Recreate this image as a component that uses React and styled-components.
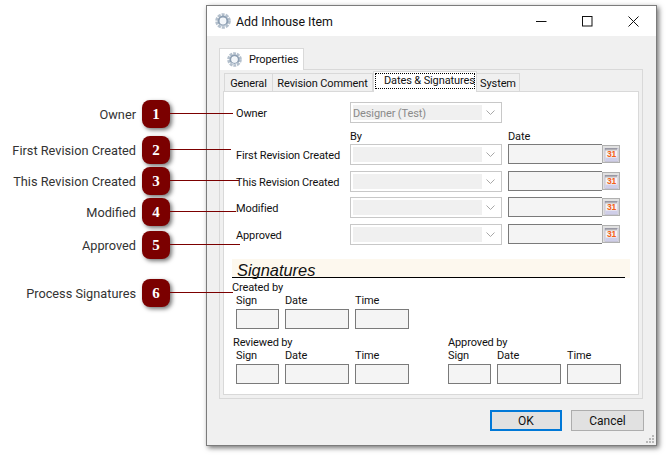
import React from "react";
import styled, { createGlobalStyle } from "styled-components";

const Global = createGlobalStyle`
  *, *::before, *::after { box-sizing: border-box; }
  html, body { margin: 0; padding: 0; background: #fff; }
  body { font-family: Roboto, "Noto Sans", sans-serif; font-size: 11px; letter-spacing: -0.12px; color: #111; overflow: hidden; }
`;
const Page = styled.div`display:flex;align-items:flex-start;width:667px;height:455px;overflow:hidden;`;
const Callouts = styled.div`position:relative;z-index:2;display:flex;flex-direction:column;width:170px;padding-top:100px;flex:none;letter-spacing:0;`;
const CalloutRow = styled.div`display:flex;align-items:center;justify-content:flex-end;gap:6px;height:28px;margin-top:${p=>p.$gap}px;`;
const CalloutLabel = styled.span`font-family:Roboto,sans-serif;font-size:12.75px;color:#333;white-space:nowrap;`;
const Badge = styled.div`
  position:relative;width:28px;height:28px;flex:none;border-radius:8px;background:#7b0000;color:#fff;
  display:flex;align-items:center;justify-content:center;font-family:"Liberation Serif",serif;font-weight:700;font-size:15px;
  box-shadow:2px 2px 4px rgba(0,0,0,.55);
  &::after{content:"";position:absolute;left:100%;top:13px;height:1.4px;width:${p=>p.$line}px;background:#7b0000;}
`;
const Dialog = styled.div`
  position:relative;flex:none;margin:5px 0 0 36px;width:451px;height:441px;background:#f0f0f0;
  border:1px solid #7c7c7c;box-shadow:2px 2px 5px rgba(0,0,0,.55);display:flex;flex-direction:column;
`;
const TitleBar = styled.div`height:30px;background:#fff;display:flex;align-items:center;padding-left:8px;flex:none;`;
const TitleText = styled.span`font-size:12.4px;letter-spacing:0;margin-left:5px;flex:1;color:#111;`;
const WinBtn = styled.div`width:46px;height:30px;display:flex;align-items:center;justify-content:center;`;
const Body = styled.div`flex:1;padding:12px 12px 0;display:flex;flex-direction:column;`;
const PropTab = styled.div`
  position:relative;z-index:1;width:85px;height:22px;margin-bottom:-1px;background:#fff;border:1px solid #d9d9d9;border-bottom:none;
  display:flex;align-items:center;gap:7px;padding-left:7px;
`;
const OuterPanel = styled.div`width:424px;height:330px;border:1px solid #d9d9d9;padding:1px 3px 3px;display:flex;flex-direction:column;`;
const TabStrip = styled.div`display:flex;align-items:flex-end;height:21px;flex:none;position:relative;z-index:1;margin-bottom:-1px;padding-left:1px;`;
const InnerTab = styled.div`
  width:${p=>p.$w}px;height:${p=>p.$active?21:19}px;background:${p=>p.$active?"#fff":"#f0f0f0"};
  border:1px solid #d9d9d9;border-bottom:${p=>p.$active?"none":"1px solid #d9d9d9"};border-left:${p=>p.$first||p.$active?"1px solid #d9d9d9":"none"};
  display:flex;align-items:center;justify-content:center;white-space:nowrap;padding-top:1px;
`;
const Focus = styled.span`border:1px dotted #000;padding:0 0 0 8px;line-height:14px;margin-top:-3px;width:100px;text-align:center;`;
const InnerPanel = styled.div`flex:1;background:#fff;border:1px solid #d9d9d9;padding-top:10px;display:flex;flex-direction:column;`;
const Form = styled.div`padding-left:12px;`;
const Row = styled.div`display:flex;align-items:flex-start;height:21px;margin-top:${p=>p.$gap||0}px;`;
const FieldLabel = styled.div`width:114px;flex:none;line-height:16px;margin-top:${p=>p.$dy||0}px;white-space:nowrap;`;
const Select = styled.div`
  width:152px;height:21px;flex:none;border:1px solid #c8c8c8;padding:2px;display:flex;align-items:stretch;background:#fff;
`;
const SelectValue = styled.div`width:129px;background:#f0f0f0;color:#8a8a8a;line-height:17px;white-space:nowrap;`;
const Chevron = styled.div`flex:1;display:flex;align-items:center;justify-content:center;`;
const DateInput = styled.div`width:94px;height:20px;flex:none;margin-left:6px;background:#f4f4f4;border:1px solid #7a7a7a;border-right:none;`;
const CalBtn = styled.div`width:18px;height:18px;flex:none;margin:1px 0 0 0;border:1px solid #b0b0b0;background:#e1e1e1;display:flex;align-items:center;justify-content:center;`;
const HeadRow = styled.div`display:flex;height:16px;margin-top:5px;line-height:18px;`;
const HeadBy = styled.div`margin-left:114px;width:158px;`;
const Band = styled.div`margin:14px 0 0 8px;width:398px;height:19px;background:#fdf8ee;`;
const Heading = styled.div`width:393px;height:19px;border-bottom:1.5px solid #000;padding-left:5px;font-family:"Liberation Sans",sans-serif;font-style:italic;font-size:16.4px;letter-spacing:0;line-height:23px;color:#111;`;
const SignArea = styled.div`padding-left:12px;`;
const Groups = styled.div`display:flex;gap:39px;margin-top:${p=>p.$gap}px;`;
const Group = styled.div`display:grid;grid-template-columns:43px 64px 54px;column-gap:6px;grid-auto-rows:auto;`;
const GroupTitle = styled.div`grid-column:1 / -1;line-height:15px;height:13px;margin-left:${p=>p.$dx||0}px;white-space:nowrap;`;
const ColLabel = styled.div`line-height:15px;height:16px;`;
const SignInput = styled.div`height:20px;background:#f4f4f4;border:1px solid #7a7a7a;`;
const Footer = styled.div`display:flex;justify-content:flex-end;gap:9px;margin-top:11px;`;
const Button = styled.div`
  width:${p=>p.$w}px;height:21px;background:#e1e1e1;border:${p=>p.$primary?"2px solid #0078d7":"1px solid #adadad"};
  display:flex;align-items:center;justify-content:center;font-size:12px;letter-spacing:0;
`;
const Grip = styled.svg`position:absolute;right:1px;bottom:1px;`;

const Gear = ({ size = 16 }) => (
  <svg width={size} height={size} viewBox="0 0 16 16">
    <circle cx="8" cy="8" r="6.4" fill="none" stroke="#b4c0cd" strokeWidth="2.8" strokeDasharray="3 1" />
    <circle cx="8" cy="8" r="4.4" fill="none" stroke="#8d9fb3" strokeWidth="2" />
    <circle cx="8" cy="8" r="3" fill="#f2f6fa" />
    <path d="M4.6 11.6a5 5 0 0 0 6.8 0" fill="none" stroke="#d3dce5" strokeWidth="1" />
  </svg>
);
const Cal = () => (
  <svg width="15" height="15" viewBox="0 0 15 15">
    <rect x="1" y="1.5" width="13" height="13" fill="#f5f2f2" stroke="#b3b1c8" strokeWidth=".7" />
    <path d="M2 1v2.4M4 1v2.4M6 1v2.4M8 1v2.4M10 1v2.4M12 1v2.4" stroke="#6f6e78" strokeWidth="1" />
    <rect x="1.4" y="10.6" width="12.2" height="3.6" fill="#cfcee8" />
    <text x="7.5" y="10" textAnchor="middle" fontFamily="Liberation Sans" fontWeight="700" fontSize="8.5" fill="#f2601a">31</text>
  </svg>
);
const ChevronIcon = () => (
  <svg width="9" height="5" viewBox="0 0 9 5"><path d="M.5.5l4 4 4-4" fill="none" stroke="#a8a8a8" /></svg>
);

const calloutData = [
  ["Owner", 1, 0, 63], ["First Revision Created", 2, 8, 61], ["This Revision Created", 3, 3, 69],
  ["Modified", 4, 3, 66], ["Approved", 5, 5, 70], ["Process Signatures", 6, 20, 63],
];
const fields = [["First Revision Created", 0, 4], ["This Revision Created", 6, 4], ["Modified", 5, 4], ["Approved", 6, 4]];

const SignGroup = ({ title, dx }) => (
  <Group>
    <GroupTitle $dx={dx}>{title}</GroupTitle>
    <ColLabel>Sign</ColLabel><ColLabel>Date</ColLabel><ColLabel>Time</ColLabel>
    <SignInput /><SignInput /><SignInput />
  </Group>
);

export default function App() {
  return (
    <Page>
      <Global />
      <Callouts>
        {calloutData.map(([t, n, g, l]) => (
          <CalloutRow key={n} $gap={g}>
            <CalloutLabel>{t}</CalloutLabel>
            <Badge $line={l}>{n}</Badge>
          </CalloutRow>
        ))}
      </Callouts>
      <Dialog>
        <TitleBar>
          <Gear />
          <TitleText>Add Inhouse Item</TitleText>
          <WinBtn><svg width="11" height="11"><path d="M0 5.5h10.5" stroke="#111" /></svg></WinBtn>
          <WinBtn><svg width="11" height="11"><rect x=".5" y=".5" width="9.5" height="9.5" fill="none" stroke="#111" /></svg></WinBtn>
          <WinBtn><svg width="11" height="11"><path d="M.5.5l10 10M10.5.5l-10 10" stroke="#111" /></svg></WinBtn>
        </TitleBar>
        <Body>
          <PropTab><Gear size={15} />Properties</PropTab>
          <OuterPanel>
            <TabStrip>
              <InnerTab $w={49} $first>General</InnerTab>
              <InnerTab $w={100}>Revision Comment</InnerTab>
              <InnerTab $w={104} $active><Focus>Dates &amp; Signatures</Focus></InnerTab>
              <InnerTab $w={43}>System</InnerTab>
            </TabStrip>
            <InnerPanel>
              <Form>
                <Row>
                  <FieldLabel $dy={4}>Owner</FieldLabel>
                  <Select><SelectValue>Designer (Test)</SelectValue><Chevron><ChevronIcon /></Chevron></Select>
                </Row>
                <HeadRow><HeadBy>By</HeadBy><div>Date</div></HeadRow>
                {fields.map(([t, g, dy]) => (
                  <Row key={t} $gap={g}>
                    <FieldLabel $dy={dy}>{t}</FieldLabel>
                    <Select><SelectValue /><Chevron><ChevronIcon /></Chevron></Select>
                    <DateInput />
                    <CalBtn><Cal /></CalBtn>
                  </Row>
                ))}
              </Form>
              <Band><Heading>Signatures</Heading></Band>
              <SignArea>
                <Groups $gap={2}><SignGroup title="Created by" dx={-4} /></Groups>
                <Groups $gap={6}>
                  <SignGroup title="Reviewed by" dx={-3} />
                  <SignGroup title="Approved by" />
                </Groups>
              </SignArea>
            </InnerPanel>
          </OuterPanel>
          <Footer>
            <Button $w={72} $primary>OK</Button>
            <Button $w={73}>Cancel</Button>
          </Footer>
        </Body>
        <Grip width="10" height="10" viewBox="0 0 10 10">
          <path d="M7 1h2v2H7zM4 4h2v2H4zM7 4h2v2H7zM1 7h2v2H1zM4 7h2v2H4zM7 7h2v2H7z" fill="#b8b8b8" />
        </Grip>
      </Dialog>
    </Page>
  );
}
